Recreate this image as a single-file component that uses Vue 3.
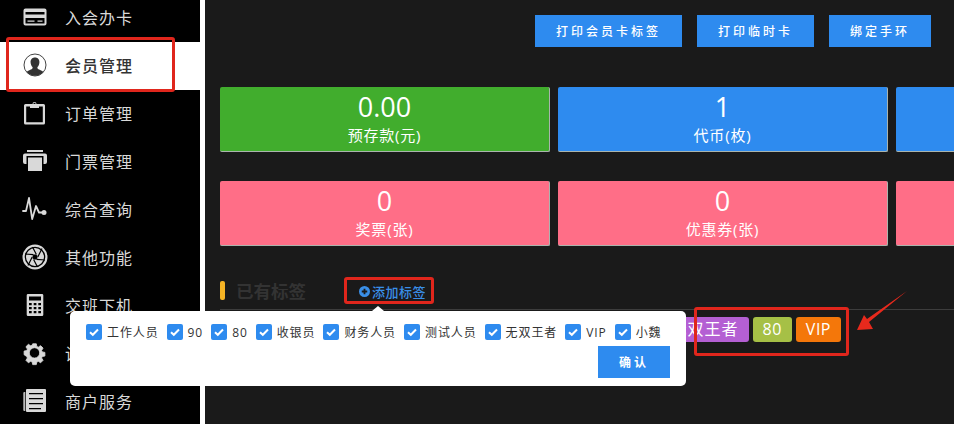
<script setup>
const c = '#d9d9d9'
const navItems = [
  { label: '入会办卡', shapes: [
    { d: 'M2 0h19a2 2 0 0 1 2 2v13a2 2 0 0 1-2 2H2a2 2 0 0 1-2-2V2a2 2 0 0 1 2-2zM2 3.5V6h19V3.5zM2 9.5V15h19V9.5zM4 12h7v1.2H4zM14 12h5v1.2h-5z', fill: c, 'fill-rule': 'evenodd', transform: 'translate(0.5 3.5)' }
  ] },
  { label: '会员管理', active: true, shapes: [
    { d: 'M12 1a11 11 0 1 0 0 22a11 11 0 1 0 0-22z', fill: '#fff', stroke: '#444', 'stroke-width': 1 },
    { d: 'M12 4.5c-3 0-4.6 2.3-4.4 5 .1 1.8.8 3.4 1.9 4.6.3.9 0 1.7-.9 2.2-1.700 .8-3.700 1.300-4.900 2.700a11 11 0 0 0 16.600 0c-1.200-1.400-3.200-1.900-4.900-2.700-.9-.5-1.200-1.300-.9-2.200 1.100-1.200 1.800-2.800 1.900-4.600.2-2.700-1.400-5-4.400-5z', fill: '#333' }
  ] },
  { label: '订单管理', shapes: [
    { d: 'M2.500 3H20.500A1.500 1.500 0 0 1 22 4.500V22a1.500 1.500 0 0 1-1.500 1.500H2.500A1.500 1.500 0 0 1 1 22V4.500A1.500 1.500 0 0 1 2.500 3zM3.200 5.500V21.300H19.800V5.500z', fill: c, 'fill-rule': 'evenodd' },
    { d: 'M7 3h2.500a2 2 0 0 1 4 0H16v4H7zM11.500 1.800a1.100 1.100 0 1 0 .01 0z', fill: c, 'fill-rule': 'evenodd' }
  ] },
  { label: '门票管理', shapes: [
    { d: 'M4 1h16v2H4zM2 4.500h20a2 2 0 0 1 2 2V13a2 2 0 0 1-2 2H20.500V7H3.500V15H2a2 2 0 0 1-2-2V6.500a2 2 0 0 1 2-2zM5 8.500h14V22H5z', fill: c }
  ] },
  { label: '综合查询', shapes: [
    { d: 'M0 14H3L6 1l3.200 21L13 9l3 6.500h5', fill: 'none', stroke: c, 'stroke-width': 1.8, 'stroke-linejoin': 'round', 'stroke-linecap': 'round' },
    { d: 'M21 13a2.500 2.500 0 1 0 0 5a2.500 2.500 0 1 0 0-5z', fill: c }
  ] },
  { label: '其他功能', shapes: [
    { d: 'M12 -.5a12.500 12.500 0 1 0 0 25a12.500 12.500 0 1 0 0-25zM12 1.700a10.300 10.300 0 1 1 0 20.600a10.300 10.300 0 1 1 0-20.600z', fill: c, 'fill-rule': 'evenodd' },
    { d: 'M12 3a9 9 0 1 0 0 18a9 9 0 1 0 0-18z', fill: c },
    { d: 'M14.800 12L19 3.500M13.400 14.400L22 15M10.600 14.400L14.500 22M9.200 12L5 20.500M10.600 9.600L2 9M13.400 9.600L9.500 2', fill: 'none', stroke: '#000', 'stroke-width': 1.2 },
    { d: 'M12 9.200L14.400 10.600V13.400L12 14.800L9.600 13.400V10.600z', fill: '#000' }
  ] },
  { label: '交班下机', shapes: [
    { d: 'M5 1h14a1.300 1.300 0 0 1 1.300 1.300v19.400A1.300 1.300 0 0 1 19 23H5a1.300 1.300 0 0 1-1.300-1.300V2.300A1.300 1.300 0 0 1 5 1zM6 3.500v4h12v-4zM6 10v2.300h2.700V10zM10.700 10v2.300h2.700V10zM15.300 10v2.300H18V10zM6 14v2.300h2.700V14zM10.700 14v2.300h2.700V14zM15.300 14v2.300H18V14zM6 18v2.300h2.700V18zM10.700 18v2.300h2.700V18zM15.300 18v2.300H18V18z', fill: c, 'fill-rule': 'evenodd' }
  ] },
  { label: '设置', shapes: [
    { d: 'M9.800 1h4.400l.6 3.200 1.800.8 2.800-1.800 3 3-1.800 2.800.8 1.800 3.200.6v4.400l-3.200.6-.8 1.800 1.800 2.800-3 3-2.800-1.800-1.800.8-.6 3.200H9.800l-.6-3.200-1.800-.8-2.800 1.800-3-3 1.800-2.800-.8-1.800L-.6 14.200V9.800l3.200-.6.8-1.800-1.800-2.800 3-3 2.800 1.800 1.800-.8zM12 5.700a6.300 6.300 0 1 0 0 12.600a6.300 6.300 0 1 0 0-12.600z', fill: c, 'fill-rule': 'evenodd', stroke: c, 'stroke-width': 1, 'stroke-linejoin': 'round', transform: 'translate(1.600 2) scale(.825)' }
  ] },
  { label: '商户服务', shapes: [
    { d: 'M4 0h18a1 1 0 0 1 1 1v21a1 1 0 0 1-1 1H4a1 1 0 0 1-1-1V1a1 1 0 0 1 1-1zM6 4v1.200h14V4zM6 9v1.200h14V9zM6 14v1.200h14V14zM6 19v1.200h12V19z', fill: c, 'fill-rule': 'evenodd' },
    { d: 'M2.300 3v19H1.300A1 1 0 0 1 .3 21V4a1 1 0 0 1 1-1z', fill: '#bbb' }
  ] }
]

const actions = ['打印会员卡标签', '打印临时卡', '绑定手环']
const stats = [
  { value: '0.00', label: '预存款(元)', tone: 'green' },
  { value: '1', label: '代币(枚)', tone: 'blue' },
  { value: '', label: '', tone: 'blue' },
  { value: '0', label: '奖票(张)', tone: 'pink' },
  { value: '0', label: '优惠券(张)', tone: 'pink' },
  { value: '', label: '', tone: 'pink' }
]
const options = ['工作人员', '90', '80', '收银员', '财务人员', '测试人员', '无双王者', 'VIP', '小魏']
const tags = [
  { text: '无双王者', tone: 'purple' },
  { text: '80', tone: 'olive' },
  { text: 'VIP', tone: 'orange' }
]
</script>

<template>
  <div class="page">
    <aside class="sidebar">
      <div v-for="item in navItems" :key="item.label" class="nav-item" :class="{ active: item.active }">
        <svg class="nav-icon" viewBox="0 0 24 24" width="24" height="24">
          <path v-for="(s, i) in item.shapes" :key="i" v-bind="s" />
        </svg>
        <span>{{ item.label }}</span>
      </div>
    </aside>

    <main class="main">
      <div class="toolbar">
        <button v-for="a in actions" :key="a" class="action">{{ a }}</button>
      </div>

      <div class="stats">
        <div v-for="(s, i) in stats" :key="i" class="stat" :class="s.tone">
          <div class="stat-value">{{ s.value }}</div>
          <div class="stat-label">{{ s.label }}</div>
        </div>
      </div>

      <div class="section-head">
        <i class="section-bar"></i>
        <span class="section-title">已有标签</span>
        <span class="add-tag">
          <svg viewBox="0 0 12 12" width="11" height="11">
            <path d="M6 0a6 6 0 1 0 0 12a6 6 0 1 0 0-12zM5 3h2v2h2v2H7v2H5V7H3V5h2z" fill="#3a8fe8" fill-rule="evenodd" />
          </svg>
          添加标签
        </span>
      </div>

      <div class="tags">
        <span v-for="t in tags" :key="t.text" class="tag" :class="t.tone">{{ t.text }}</span>
      </div>
    </main>

    <div class="popup">
      <i class="popup-caret"></i>
      <div class="options">
        <label v-for="o in options" :key="o" class="option">
          <span class="check">
            <svg viewBox="0 0 16 16" width="16" height="16">
              <path d="M4 8.200l2.800 2.600L12 5.500" fill="none" stroke="#fff" stroke-width="2" />
            </svg>
          </span>
          {{ o }}
        </label>
      </div>
      <div class="popup-foot">
        <button class="confirm">确认</button>
      </div>
    </div>

    <i class="mark mark-nav"></i>
    <i class="mark mark-add"></i>
    <i class="mark mark-tags"></i>
    <svg class="arrow" viewBox="0 0 60 50" width="60" height="50">
      <path d="M55 1 L17 32 L21 39 L5 40 L12 25 L15 29 Z" fill="#e8291c" />
    </svg>
  </div>
</template>

<style>
body { background: #1a1a1a; }
</style>

<style scoped>
.page {
  position: relative;
  display: flex;
  width: 954px;
  height: 424px;
  overflow: hidden;
  background: #1a1a1a;
  font-family: "Open Sans", "Noto Sans CJK SC", sans-serif;
}
.sidebar {
  flex: 0 0 200px;
  margin-top: -6px;
  background: #000;
}
.nav-item {
  display: flex;
  align-items: center;
  gap: 18px;
  height: 48px;
  box-sizing: border-box;
  padding: 0 0 2px 23px;
  font-size: 16px;
  letter-spacing: 1px;
  color: #d9d9d9;
}
.nav-item.active {
  background: #fff;
  color: #333;
  font-weight: 500;
}
.nav-icon { flex: none; overflow: visible; }
.main {
  flex: 1;
  min-width: 0;
  padding: 15px 0 0 15px;
  border-left: 5px solid #fff;
  overflow: hidden;
}
.toolbar {
  display: flex;
  justify-content: flex-end;
  gap: 15px;
  padding-right: 23px;
}
.action {
  height: 32px;
  padding: 0 21px;
  border: 0;
  background: #2e8bef;
  color: #fff;
  font: 500 12px "Open Sans", "Noto Sans CJK SC", sans-serif;
  letter-spacing: 3px;
}
.stats {
  display: grid;
  grid-template-columns: repeat(3, 330px);
  column-gap: 8px;
  row-gap: 29px;
  margin-top: 40px;
}
.stat {
  height: 65px;
  border-right: 1px solid #aab4ad;
  border-bottom: 1px solid #aab4ad;
  border-radius: 2px;
  color: #fff;
  text-align: center;
  box-sizing: border-box;
}
.stat.green { background: #41ad2d; }
.stat.blue { background: #2e8bef; }
.stat.pink { background: #ff6e87; }
.stat-value {
  height: 38px;
  padding-top: 2px;
  font-size: 27px;
  line-height: 36px;
  box-sizing: border-box;
}
.stat-label {
  font-size: 15px;
  line-height: 20px;
  letter-spacing: 0.8px;
}
.section-head {
  display: flex;
  align-items: center;
  margin-top: 35px;
  border-bottom: 1px solid #3d3d3d;
  padding-bottom: 9px;
  height: 19px;
}
.section-bar {
  width: 5px;
  height: 19px;
  border-radius: 2px;
  background: #f5b324;
}
.section-title {
  width: 72px;
  margin-left: 11px;
  font-size: 17.500px;
  font-weight: 700;
  color: #333;
}
.add-tag {
  display: flex;
  align-items: center;
  gap: 2px;
  margin: 2px 0 0 51px;
  font-size: 13px;
  font-weight: 500;
  letter-spacing: 0.5px;
  color: #3a8fe8;
}
.tags {
  display: flex;
  justify-content: flex-end;
  gap: 4px;
  margin-top: 7px;
  padding-right: 113px;
}
.tag {
  height: 25px;
  padding: 0 10px;
  border-radius: 3px;
  font-size: 16px;
  line-height: 25px;
  letter-spacing: 0.5px;
  color: #fff;
}
.tag.purple { background: #b45fd3; letter-spacing: 1px; }
.tag.olive { background: #a6c046; }
.tag.orange { background: #f4770a; font-weight: 500; }
.popup {
  position: absolute;
  left: 70px;
  top: 311px;
  width: 616px;
  height: 75px;
  box-sizing: border-box;
  padding: 13px 16px 8px;
  border-radius: 5px;
  background: #fff;
}
.popup-caret {
  position: absolute;
  left: 302px;
  top: -5px;
  border-left: 6px solid transparent;
  border-right: 6px solid transparent;
  border-bottom: 5px solid #fff;
}
.options {
  display: flex;
  gap: 8px;
}
.option {
  display: flex;
  align-items: center;
  gap: 5px;
  height: 16px;
  font-size: 12px;
  letter-spacing: 0.9px;
  color: #333;
  white-space: nowrap;
}
.check {
  width: 16px;
  height: 16px;
  border-radius: 2px;
  background: #2e8bef;
}
.check svg { display: block; }
.popup-foot {
  display: flex;
  justify-content: flex-end;
  margin-top: 6px;
}
.confirm {
  width: 72px;
  height: 32px;
  border: 0;
  background: #2e8bef;
  color: #fff;
  font: 700 12px "Open Sans", "Noto Sans CJK SC", sans-serif;
  letter-spacing: 3px;
}
.mark {
  position: absolute;
  box-sizing: border-box;
  border: 3px solid #e0261c;
  border-radius: 3px;
}
.mark-nav { left: 6px; top: 37px; width: 169px; height: 55px; }
.mark-add { left: 344px; top: 277px; width: 90px; height: 27px; }
.mark-tags { left: 694px; top: 307px; width: 155px; height: 49px; }
.arrow { position: absolute; left: 852px; top: 290px; }
</style>
